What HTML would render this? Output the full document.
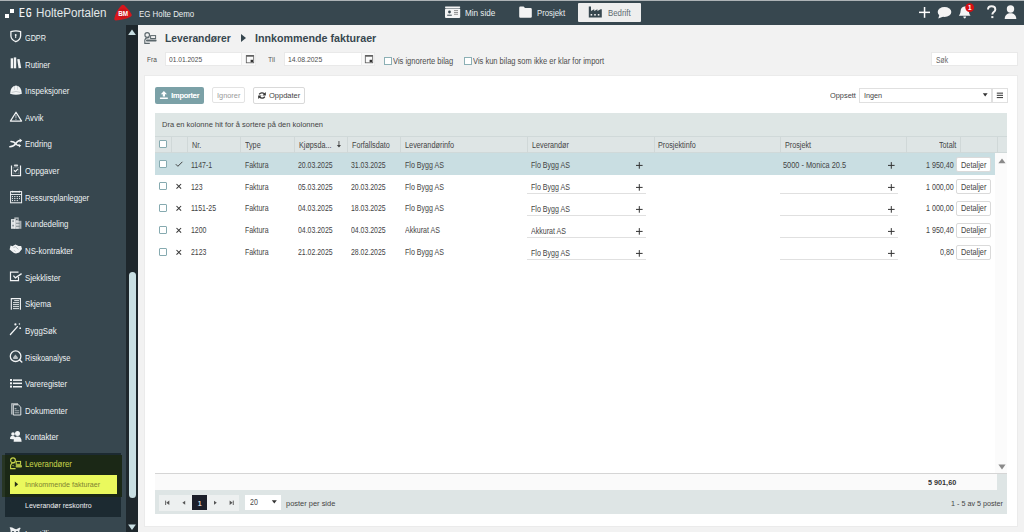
<!DOCTYPE html>
<html><head><meta charset="utf-8"><style>
*{margin:0;padding:0;box-sizing:border-box}
html,body{width:1024px;height:532px;overflow:hidden;background:#f2f2f2;font-family:"Liberation Sans",sans-serif;color:#333}
.a{position:absolute}
.t{position:absolute;white-space:nowrap;line-height:1;transform-origin:0 0}
#topstrip{left:0;top:0;width:1024px;height:1px;background:#adb3b6}
#hdr{left:0;top:1px;width:1024px;height:24px;background:#37474f}
#side{left:0;top:25px;width:126px;height:507px;background:#37474f}
#track{left:126.2px;top:25px;width:12.2px;height:507px;background:#1e272c}
#content{left:138px;top:25px;width:886px;height:507px;background:#f2f2f2}
#panel{left:144.3px;top:75.3px;width:874px;height:451.3px;background:#fff;border:1px solid #ebebeb}
</style></head>
<body>
<div id="topstrip" class="a"></div>
<div id="hdr" class="a"></div>
<div class="a" style="left:5px;top:13.5px;width:4.30px;height:4.00px;background:#fff"></div>
<div class="a" style="left:10.1px;top:8.7px;width:4.10px;height:4.10px;background:#fff"></div>
<div class="t" style="left:18.80px;top:7.00px;font-size:12.2px;color:#f2f4f5;transform:scaleX(0.6533);letter-spacing:0px;text-shadow:0.6px 0 0 #f2f4f5">E</div>
<div class="t" style="left:26.30px;top:7.00px;font-size:12.2px;color:#f2f4f5;transform:scaleX(0.5570);letter-spacing:0px;text-shadow:0.6px 0 0 #f2f4f5">G</div>
<div class="t" style="left:36.40px;top:7.00px;font-size:12.3px;color:#e3e7e9;transform:scaleX(0.9472);letter-spacing:0px;">HoltePortalen</div>
<svg class="a" style="left:113px;top:3px" width="20" height="18" viewBox="0 0 20 18">
<path d="M8.6 2.2 Q9.9 1.1 11.3 2.2 Q16 6.5 18.6 11.2 Q19.3 12.9 17.6 13.7 Q11 17 2.6 17.4 Q0.9 17.4 1.3 15.6 Q2.8 8 8.6 2.2 Z" fill="#d8161c"/>
<circle cx="10" cy="10.5" r="5" fill="#c01218" opacity="0.6"/>
<text x="10" y="12.6" font-family="Liberation Sans" font-weight="bold" font-size="6.4" fill="#fff" text-anchor="middle" letter-spacing="-0.1">BM</text>
</svg>
<div class="t" style="left:138.80px;top:9.00px;font-size:9.4px;color:#e9eef0;transform:scaleX(0.8398);letter-spacing:0px;">EG Holte Demo</div>
<svg class="a" style="left:444px;top:5px" width="18" height="14" viewBox="0 0 18 14">
<rect x="1" y="1.4" width="15.2" height="1.5" rx="0.6" fill="#f4f4f4"/>
<rect x="1" y="3.4" width="15.2" height="9.5" rx="1" fill="#f4f4f4"/>
<circle cx="5.5" cy="7" r="1.4" fill="#37474f"/>
<rect x="3.2" y="9.7" width="4.6" height="1" fill="#37474f"/>
<rect x="10" y="5.2" width="4" height="0.9" fill="#888"/>
<rect x="10" y="7" width="4" height="0.9" fill="#888"/>
<rect x="10" y="8.8" width="4" height="0.9" fill="#888"/>
</svg>
<div class="t" style="left:464.90px;top:9.00px;font-size:9.0px;color:#e9eef0;transform:scaleX(0.9038);letter-spacing:0px;">Min side</div>
<svg class="a" style="left:518px;top:5px" width="15" height="14" viewBox="0 0 15 14">
<path d="M1.2 2.8 Q1.2 1.6 2.4 1.6 L5.6 1.6 L7 3 L12.6 3 Q13.8 3 13.8 4.2 L13.8 11.8 Q13.8 12.8 12.6 12.8 L2.4 12.8 Q1.2 12.8 1.2 11.6 Z" fill="#f4f4f4"/>
</svg>
<div class="t" style="left:537.00px;top:9.00px;font-size:9.0px;color:#e9eef0;transform:scaleX(0.8649);letter-spacing:0px;">Prosjekt</div>
<div class="a" style="left:578px;top:3px;width:63.00px;height:19.40px;background:#eeeeee;border-radius:1px"></div>
<svg class="a" style="left:588px;top:5px" width="15" height="14" viewBox="0 0 15 14">
<path d="M0.8 1.6 L3 1.6 L3 6 L6.2 4.2 L6.2 6 L9.4 4.2 L9.4 6 L12.6 4.2 L13.8 4.2 L13.8 12.6 L0.8 12.6 Z" fill="#37474f"/>
<rect x="2.6" y="9" width="1.6" height="1.6" fill="#eee"/>
<rect x="6.2" y="9" width="1.6" height="1.6" fill="#eee"/>
<rect x="9.8" y="9" width="1.6" height="1.6" fill="#eee"/>
</svg>
<div class="t" style="left:607.60px;top:9.00px;font-size:9.0px;color:#5d6a70;transform:scaleX(0.8689);letter-spacing:0px;">Bedrift</div>
<svg class="a" style="left:916px;top:3px" width="108" height="18" viewBox="0 0 108 18">
<rect x="3" y="8.6" width="11" height="1.5" fill="#fff"/>
<rect x="7.8" y="4" width="1.5" height="10.8" fill="#fff"/>
<ellipse cx="28.5" cy="9" rx="6.8" ry="5" fill="#f4f4f4"/>
<path d="M23.5 11.5 L22.3 15.6 L27.5 13.6 Z" fill="#f4f4f4"/>
<path d="M48.5 3.4 C45.8 3.4 44.8 5.6 44.6 8 C44.4 10.6 43.6 11.6 42.8 12.8 L54.6 12.8 C53.8 11.6 53 10.6 52.8 8 C52.6 5.6 51.6 3.4 48.7 3.4 Z" fill="#f4f4f4"/>
<path d="M47.3 13.6 L50.1 13.6 Q49.9 15.6 48.7 15.6 Q47.5 15.6 47.3 13.6Z" fill="#f4f4f4"/>
<circle cx="53.7" cy="4.6" r="4.4" fill="#d60f13"/>
<text x="53.8" y="6.9" font-family="Liberation Sans" font-weight="bold" font-size="6.4" fill="#fff" text-anchor="middle">1</text>
<path d="M72 6.5 C72 4.4 73.6 3.2 75.6 3.2 C77.7 3.2 79.3 4.4 79.3 6.4 C79.3 8.9 76.4 9.1 76.4 11.2 L76.4 11.6" fill="none" stroke="#f4f4f4" stroke-width="2"/>
<rect x="75.3" y="13.1" width="2.1" height="2" fill="#f4f4f4"/>
<circle cx="94.5" cy="6" r="3.7" fill="#f4f4f4"/>
<path d="M88.7 16 C88.7 12 91.3 10.2 94.5 10.2 C97.7 10.2 100.3 12 100.3 16 Z" fill="#f4f4f4"/>
</svg>
<div id="side" class="a"></div>
<svg class="a" width="20" height="16" viewBox="0 0 20 16" style="left:6px;top:29.30px"><path d="M4.9 2.7 Q10 0.9 14.6 2.7 L14.6 7 Q14.3 10.9 9.8 12.7 Q5.3 10.9 4.9 7 Z" fill="none" stroke="#f2f4f5" stroke-width="1.3"/><circle cx="9.7" cy="5.9" r="0.95" fill="#f2f4f5"/><rect x="9.2" y="6" width="1" height="3" fill="#f2f4f5"/></svg>
<div class="t" style="left:25.10px;top:34.00px;font-size:8.9px;color:#eef2f4;transform:scaleX(0.8165);letter-spacing:0px;">GDPR</div>
<svg class="a" width="20" height="16" viewBox="0 0 20 16" style="left:6px;top:55.94px"><rect x="4.7" y="2.3" width="2.4" height="10" fill="#f2f4f5"/><rect x="7.8" y="1.4" width="2.4" height="10.9" fill="#f2f4f5"/><path d="M11.2 3.2 L13.6 3 L15.2 12 L12.6 12.3 Z" fill="#f2f4f5"/></svg>
<div class="t" style="left:25.10px;top:61.00px;font-size:8.9px;color:#eef2f4;transform:scaleX(0.8800);letter-spacing:0px;">Rutiner</div>
<svg class="a" width="20" height="16" viewBox="0 0 20 16" style="left:6px;top:82.58px"><path d="M4.1 10.7 Q4.3 3.2 10 2.4 Q15.7 3.2 15.9 10.7 Q10 12.6 4.1 10.7 Z" fill="#f2f4f5"/><path d="M5.6 9.4 Q10 7.6 14.4 9.4" fill="none" stroke="#37474f" stroke-width="0.5" opacity="0.5"/><rect x="8.3" y="2.8" width="0.5" height="4" fill="#37474f" opacity="0.35"/><rect x="11.2" y="2.8" width="0.5" height="4" fill="#37474f" opacity="0.35"/></svg>
<div class="t" style="left:25.10px;top:87.00px;font-size:8.9px;color:#eef2f4;transform:scaleX(0.8818);letter-spacing:0px;">Inspeksjoner</div>
<svg class="a" width="20" height="16" viewBox="0 0 20 16" style="left:6px;top:109.22px"><path d="M10 3.2 L15.6 12.1 L4.4 12.1 Z" fill="none" stroke="#f2f4f5" stroke-width="1.2" stroke-linejoin="round"/><rect x="9.5" y="5.6" width="0.9" height="3.8" fill="#f2f4f5" opacity="0.75"/><rect x="9.5" y="10.1" width="0.9" height="0.9" fill="#f2f4f5" opacity="0.75"/></svg>
<div class="t" style="left:25.10px;top:114.00px;font-size:8.9px;color:#eef2f4;transform:scaleX(0.8800);letter-spacing:0px;">Avvik</div>
<svg class="a" width="20" height="16" viewBox="0 0 20 16" style="left:6px;top:135.86px"><path d="M3.8 10.7 Q8 10.6 9.8 7.5 Q11.4 4.6 14.2 4.5" fill="none" stroke="#f2f4f5" stroke-width="1.5" stroke-linecap="round"/><path d="M5 5.6 Q8 5.7 9.6 7.6 Q11.2 9.6 13.4 9.6" fill="none" stroke="#f2f4f5" stroke-width="1.5" stroke-linecap="round"/><path d="M13.6 2.6 L16.3 4.6 L13.8 6.4 Z" fill="#f2f4f5"/><path d="M12.6 8 L15.2 9.6 L13 11.5 Z" fill="#f2f4f5"/></svg>
<div class="t" style="left:25.10px;top:140.00px;font-size:8.9px;color:#eef2f4;transform:scaleX(0.8800);letter-spacing:0px;">Endring</div>
<svg class="a" width="20" height="16" viewBox="0 0 20 16" style="left:6px;top:162.50px"><path d="M5.5 2.6 L5.5 12.6 L14.5 12.6 L14.5 2.6" fill="none" stroke="#f2f4f5" stroke-width="1.2"/><rect x="7.8" y="1.4" width="4.4" height="2.2" rx="1.1" fill="#f2f4f5" opacity="0.85"/><rect x="7.2" y="4.4" width="5.6" height="6.4" fill="none" stroke="#f2f4f5" stroke-width="0.5" opacity="0.35"/><path d="M8.1 7.3 L9.4 8.7 L12 5.9" fill="none" stroke="#f2f4f5" stroke-width="1.25"/></svg>
<div class="t" style="left:25.10px;top:167.00px;font-size:8.9px;color:#eef2f4;transform:scaleX(0.8800);letter-spacing:0px;">Oppgaver</div>
<svg class="a" width="20" height="16" viewBox="0 0 20 16" style="left:6px;top:189.14px"><rect x="4.6" y="2.6" width="11" height="11.2" fill="none" stroke="#f2f4f5" stroke-width="1"/><rect x="4.6" y="5" width="11" height="0.9" fill="#f2f4f5"/><rect x="6" y="2.1" width="8" height="1.3" rx="0.6" fill="#f2f4f5" opacity="0.75"/><circle cx="6.4" cy="2.6" r="0.9" fill="#f2f4f5"/><circle cx="13.4" cy="2.6" r="0.9" fill="#f2f4f5"/><rect x="6" y="7.1" width="1" height="1" fill="#f2f4f5"/><rect x="6" y="9.1" width="1" height="1" fill="#f2f4f5"/><rect x="6" y="11.1" width="1" height="1" fill="#f2f4f5"/><rect x="8.2" y="7.1" width="1" height="1" fill="#f2f4f5"/><rect x="8.2" y="9.1" width="1" height="1" fill="#f2f4f5"/><rect x="8.2" y="11.1" width="1" height="1" fill="#f2f4f5"/><rect x="10.9" y="7.1" width="1" height="1" fill="#f2f4f5"/><rect x="10.9" y="9.1" width="1" height="1" fill="#f2f4f5"/><rect x="10.9" y="11.1" width="1" height="1" fill="#f2f4f5"/><rect x="13" y="7.1" width="1" height="1" fill="#f2f4f5"/><rect x="13" y="9.1" width="1" height="1" fill="#f2f4f5"/><rect x="8.5" y="7.35" width="2.7" height="0.5" fill="#f2f4f5" opacity="0.5"/><rect x="8.5" y="9.35" width="2.7" height="0.5" fill="#f2f4f5" opacity="0.5"/><rect x="8.5" y="11.35" width="2.7" height="0.5" fill="#f2f4f5" opacity="0.5"/></svg>
<div class="t" style="left:25.10px;top:194.00px;font-size:8.9px;color:#eef2f4;transform:scaleX(0.8649);letter-spacing:0px;">Ressursplanlegger</div>
<svg class="a" width="20" height="16" viewBox="0 0 20 16" style="left:6px;top:215.78px"><rect x="5" y="3.1" width="4.2" height="9.7" fill="#f2f4f5" opacity="0.9"/><rect x="8.3" y="1.4" width="4.4" height="11.4" fill="#f2f4f5" opacity="0.65"/><rect x="9.6" y="4.8" width="5.8" height="8" fill="#f2f4f5" opacity="0.6"/><rect x="6.2" y="4.3" width="1.8" height="1.6" fill="#37474f" opacity="0.5"/><rect x="6.2" y="8.8" width="1.8" height="1.6" fill="#37474f" opacity="0.5"/><rect x="10" y="2.8" width="1.6" height="1.2" fill="#37474f" opacity="0.8"/><rect x="10" y="6.8" width="3.6" height="0.9" fill="#37474f" opacity="0.6"/><rect x="10" y="9.8" width="3.6" height="0.9" fill="#37474f" opacity="0.6"/></svg>
<div class="t" style="left:25.10px;top:220.00px;font-size:8.9px;color:#eef2f4;transform:scaleX(0.8800);letter-spacing:0px;">Kundedeling</div>
<svg class="a" width="20" height="16" viewBox="0 0 20 16" style="left:6px;top:242.42px"><path d="M3.6 7.6 L4.6 3.4 L6.4 4.2 L9.4 2.6 L12.6 4 L15.2 4 L16 7 L13.2 10.4 L10 11.6 L8 11 L6 9.6 Z" fill="#f2f4f5"/><path d="M7.4 5.4 L9.6 4.8 L12.4 7.4" fill="none" stroke="#37474f" stroke-width="0.5" opacity="0.6"/><path d="M8 8.2 L9.4 9.6" fill="none" stroke="#37474f" stroke-width="0.5" opacity="0.6"/></svg>
<div class="t" style="left:25.10px;top:247.00px;font-size:8.9px;color:#eef2f4;transform:scaleX(0.8800);letter-spacing:0px;">NS-kontrakter</div>
<svg class="a" width="20" height="16" viewBox="0 0 20 16" style="left:6px;top:269.06px"><path d="M12.5 3.2 L4.5 3.2 L4.5 11.6 L12.5 11.6 L12.5 8" fill="none" stroke="#f2f4f5" stroke-width="1.2"/><path d="M7.4 6.6 L9.4 8.9 L15.6 4.6" fill="none" stroke="#f2f4f5" stroke-width="1.3"/></svg>
<div class="t" style="left:25.10px;top:274.00px;font-size:8.9px;color:#eef2f4;transform:scaleX(0.8800);letter-spacing:0px;">Sjekklister</div>
<svg class="a" width="20" height="16" viewBox="0 0 20 16" style="left:6px;top:295.70px"><path d="M5.3 13.8 L5.3 2.6 L14.4 2.6 L14.4 13.8" fill="none" stroke="#f2f4f5" stroke-width="1.1"/><rect x="8.2" y="4.2" width="4.8" height="0.9" fill="#f2f4f5"/><rect x="7" y="6.2" width="6" height="0.9" fill="#f2f4f5"/><rect x="7" y="8.2" width="6" height="0.9" fill="#f2f4f5"/><rect x="7" y="10.2" width="6" height="0.9" fill="#f2f4f5"/><rect x="7" y="12.2" width="6" height="0.9" fill="#f2f4f5"/></svg>
<div class="t" style="left:25.10px;top:300.00px;font-size:8.9px;color:#eef2f4;transform:scaleX(0.8800);letter-spacing:0px;">Skjema</div>
<svg class="a" width="20" height="16" viewBox="0 0 20 16" style="left:6px;top:322.34px"><path d="M4.4 12.5 L11.4 4.6" stroke="#f2f4f5" stroke-width="1.3" stroke-linecap="round"/><circle cx="9.4" cy="2.4" r="1.1" fill="#f2f4f5"/><circle cx="13.4" cy="2" r="0.8" fill="#f2f4f5"/><circle cx="14.2" cy="6.2" r="0.9" fill="#f2f4f5"/></svg>
<div class="t" style="left:25.10px;top:327.00px;font-size:8.9px;color:#eef2f4;transform:scaleX(0.8800);letter-spacing:0px;">ByggSøk</div>
<svg class="a" width="20" height="16" viewBox="0 0 20 16" style="left:6px;top:348.98px"><circle cx="9.6" cy="7.2" r="5.3" fill="none" stroke="#f2f4f5" stroke-width="1.3"/><path d="M13.6 11 L15.8 13" stroke="#f2f4f5" stroke-width="1.5" stroke-linecap="round"/><path d="M7.2 10 L7.2 8.2 L9.4 5.6 L11.8 8.2 L11.8 10 Z" fill="#f2f4f5" opacity="0.7"/></svg>
<div class="t" style="left:25.10px;top:354.00px;font-size:8.9px;color:#eef2f4;transform:scaleX(0.8286);letter-spacing:0px;">Risikoanalyse</div>
<svg class="a" width="20" height="16" viewBox="0 0 20 16" style="left:6px;top:375.62px"><rect x="4" y="3" width="2" height="2" fill="#f2f4f5"/><rect x="4" y="6.3" width="2" height="2" fill="#f2f4f5"/><rect x="4" y="9.6" width="2" height="2" fill="#f2f4f5"/><rect x="7" y="3.4" width="9" height="1.5" fill="#f2f4f5"/><rect x="7" y="6.6" width="9" height="1.5" fill="#f2f4f5"/><rect x="7" y="10" width="9" height="1.5" fill="#f2f4f5"/></svg>
<div class="t" style="left:25.10px;top:380.00px;font-size:8.9px;color:#eef2f4;transform:scaleX(0.8822);letter-spacing:0px;">Vareregister</div>
<svg class="a" width="20" height="16" viewBox="0 0 20 16" style="left:6px;top:402.26px"><path d="M5.2 1.3 L12 1.3 L12 2.6 L6.4 2.6 L6.4 12.6 L5.2 12.6 Z" fill="#f2f4f5" opacity="0.75"/><path d="M7.3 2.8 L12.4 2.8 L14.8 5.2 L14.8 13 L7.3 13 Z" fill="none" stroke="#f2f4f5" stroke-width="1" opacity="0.9"/><rect x="8.6" y="6.4" width="1.8" height="0.8" fill="#f2f4f5"/><rect x="8.6" y="8.4" width="4.6" height="0.8" fill="#f2f4f5" opacity="0.7"/><rect x="8.6" y="10.4" width="4.6" height="0.8" fill="#f2f4f5" opacity="0.7"/></svg>
<div class="t" style="left:25.10px;top:407.00px;font-size:8.9px;color:#eef2f4;transform:scaleX(0.8800);letter-spacing:0px;">Dokumenter</div>
<svg class="a" width="20" height="16" viewBox="0 0 20 16" style="left:6px;top:428.90px"><circle cx="7" cy="5" r="1.8" fill="#f2f4f5"/><path d="M4 10 Q4 6.6 7 6.8 Q9 7 9.4 9 L8.8 10.5 Z" fill="#f2f4f5"/><circle cx="11.5" cy="4.4" r="2.5" fill="#f2f4f5"/><path d="M7.6 12.8 Q7.6 7.6 11.6 7.6 Q15.6 7.6 15.6 12.8 Z" fill="#f2f4f5"/></svg>
<div class="t" style="left:25.10px;top:433.00px;font-size:8.9px;color:#eef2f4;transform:scaleX(0.8800);letter-spacing:0px;">Kontakter</div>
<div class="a" style="left:5.4px;top:453px;width:115.60px;height:64.30px;background:#1c2a31"></div>
<div class="a" style="left:2px;top:455.4px;width:119.90px;height:41.30px;background:#1b2816"></div>
<div class="a" style="left:2px;top:455.4px;width:3.40px;height:41.30px;background:#283624"></div>
<svg class="a" style="left:6px;top:456px" width="20" height="16" viewBox="0 0 20 16"><circle cx="7" cy="4.3" r="2.4" fill="none" stroke="#c9d64c" stroke-width="1.1"/><path d="M9.2 6.8 Q5.2 6.4 4.6 9.4 L4.6 12.6 L9.6 12.6" fill="none" stroke="#c9d64c" stroke-width="1.1"/><rect x="10.2" y="5.4" width="4.4" height="2.9" fill="none" stroke="#c9d64c" stroke-width="1"/><rect x="9.6" y="9" width="6.4" height="2.6" rx="1" fill="#c9d64c" opacity="0.85"/><path d="M6.4 9.6 Q7.6 9.4 8.2 10.4" fill="none" stroke="#c9d64c" stroke-width="0.8"/></svg>
<div class="t" style="left:25.10px;top:460.00px;font-size:8.9px;color:#c9d64c;transform:scaleX(0.8813);letter-spacing:0px;">Leverandører</div>
<div class="a" style="left:9.5px;top:474.8px;width:107.80px;height:18.90px;background:#eaf95d"></div>
<svg class="a" style="left:14px;top:481px" width="6" height="7" viewBox="0 0 6 7"><path d="M0.8 0.6 L4.2 3.3 L0.8 6 Z" fill="#27301a"/></svg>
<div class="t" style="left:25.00px;top:481.00px;font-size:7.4px;color:#7e8232;transform:scaleX(0.9610);letter-spacing:0px;">Innkommende fakturaer</div>
<div class="t" style="left:25.10px;top:502.00px;font-size:7.6px;color:#eef0f2;transform:scaleX(0.9194);letter-spacing:0px;">Leverandør reskontro</div>
<svg class="a" style="left:7px;top:526px" width="20" height="8" viewBox="0 0 20 8"><path d="M2.6 1.4 Q5 1.2 7 2.4 Q8.5 3.4 9.4 3.2 Q10.4 2.6 13 1.6 L13.6 2.4 Q12.4 3.4 12.4 5 L12.4 8 L3.6 8 L3.6 5 Q3.6 3.2 2.6 1.4Z" fill="#eef0f2"/><circle cx="6" cy="6.4" r="1.3" fill="#37474f"/><circle cx="10" cy="6.4" r="1.3" fill="#37474f"/></svg>
<div class="t" style="left:25.10px;top:530.00px;font-size:8.9px;color:#eef2f4;transform:scaleX(0.8800);letter-spacing:0px;">Innstillinger</div>
<div id="track" class="a"></div>
<svg class="a" style="left:128.4px;top:28.5px" width="8" height="7" viewBox="0 0 8 7"><path d="M4 0.4 L7.9 6 L0.1 6 Z" fill="#c9dfe3"/></svg>
<div class="a" style="left:128.9px;top:271.9px;width:7.00px;height:226.10px;background:#c9dfe3;border-radius:3.5px"></div>
<svg class="a" style="left:128.4px;top:523.8px" width="8" height="7" viewBox="0 0 8 7"><path d="M0.1 0.5 L7.9 0.5 L4 6 Z" fill="#c9dfe3"/></svg>
<div id="content" class="a"></div>
<svg class="a" style="left:140px;top:28px" width="20" height="18" viewBox="0 0 20 18"><circle cx="7.2" cy="6.9" r="2.3" fill="none" stroke="#5b676c" stroke-width="1.1"/><path d="M9.4 9.7 Q5.4 9.2 4.8 12.2 L4.8 15.4 L9.8 15.4" fill="none" stroke="#5b676c" stroke-width="1.1"/><rect x="10.6" y="7.6" width="5" height="2.9" fill="none" stroke="#5b676c" stroke-width="1"/><rect x="6" y="11.6" width="10.6" height="2" rx="0.8" fill="#5b676c"/></svg>
<div class="t" style="left:165.30px;top:33.00px;font-size:11.2px;color:#37474f;font-weight:bold;transform:scaleX(0.9180);letter-spacing:0px;">Leverandører</div>
<svg class="a" style="left:240px;top:33px" width="8" height="10" viewBox="0 0 8 10"><path d="M1 1 L6 5 L1 9 Z" fill="#37474f"/></svg>
<div class="t" style="left:254.70px;top:33.00px;font-size:11.2px;color:#37474f;font-weight:bold;transform:scaleX(0.9563);letter-spacing:0px;">Innkommende fakturaer</div>
<div class="t" style="left:146.90px;top:56.00px;font-size:8.1px;color:#4d4d4d;transform:scaleX(0.8039);letter-spacing:0px;">Fra</div>
<div class="a" style="left:165.2px;top:51.6px;width:91.10px;height:14.90px;background:#fff;border:1px solid #e9e9e9"></div>
<div class="a" style="left:241.3px;top:51.6px;width:15.00px;height:14.90px;background:#fafafa;border:1px solid #ececec"></div>
<svg class="a" style="left:245.10000000000002px;top:54px" width="10" height="10" viewBox="0 0 10 10"><rect x="1.3" y="1.6" width="7.4" height="7.2" fill="none" stroke="#5a5a5a" stroke-width="0.8"/><rect x="1.3" y="1.2" width="7.4" height="1.5" fill="#5a5a5a"/><rect x="5.6" y="5.8" width="2.4" height="2.4" fill="#333"/></svg>
<div class="t" style="left:169.30px;top:56.00px;font-size:7.8px;color:#4d4d4d;transform:scaleX(0.8504);letter-spacing:0px;">01.01.2025</div>
<div class="a" style="left:284.0px;top:51.6px;width:91.30px;height:14.90px;background:#fff;border:1px solid #e9e9e9"></div>
<div class="a" style="left:360.5px;top:51.6px;width:14.80px;height:14.90px;background:#fafafa;border:1px solid #ececec"></div>
<svg class="a" style="left:364.3px;top:54px" width="10" height="10" viewBox="0 0 10 10"><rect x="1.3" y="1.6" width="7.4" height="7.2" fill="none" stroke="#5a5a5a" stroke-width="0.8"/><rect x="1.3" y="1.2" width="7.4" height="1.5" fill="#5a5a5a"/><rect x="5.6" y="5.8" width="2.4" height="2.4" fill="#333"/></svg>
<div class="t" style="left:288.30px;top:56.00px;font-size:7.8px;color:#4d4d4d;transform:scaleX(0.8760);letter-spacing:0px;">14.08.2025</div>
<div class="t" style="left:268.20px;top:56.00px;font-size:8.1px;color:#5a5a5a;transform:scaleX(0.8594);letter-spacing:0px;">Til</div>
<div class="a" style="left:384.2px;top:57.0px;width:7.60px;height:7.60px;background:#fff;border:1px solid #8cb0b5"></div>
<div class="t" style="left:392.80px;top:57.00px;font-size:8.4px;color:#4d4d4d;transform:scaleX(0.9005);letter-spacing:0px;">Vis ignorerte bilag</div>
<div class="a" style="left:464.3px;top:57.0px;width:7.60px;height:7.60px;background:#fff;border:1px solid #8cb0b5"></div>
<div class="t" style="left:472.70px;top:57.00px;font-size:8.4px;color:#4d4d4d;transform:scaleX(0.8979);letter-spacing:0px;">Vis kun bilag som ikke er klar for import</div>
<div class="a" style="left:930.9px;top:51.6px;width:87.30px;height:14.70px;background:#fff;border:1px solid #e9e9e9"></div>
<div class="t" style="left:935.50px;top:56.00px;font-size:8.6px;color:#666;transform:scaleX(0.7882);letter-spacing:0px;">Søk</div>
<div id="panel" class="a"></div>
<div class="a" style="left:155.2px;top:86.9px;width:48.40px;height:17.30px;background:#7ba1a7;border-radius:2px"></div>
<svg class="a" style="left:158px;top:90px" width="11" height="10" viewBox="0 0 11 10"><path d="M5.9 1 L9 4.2 L7 4.2 L7 6.6 L4.8 6.6 L4.8 4.2 L2.8 4.2 Z" fill="#fff"/><rect x="1.9" y="7.4" width="8" height="1.6" rx="0.4" fill="#fff"/></svg>
<div class="t" style="left:170.50px;top:92.00px;font-size:8.0px;color:#fff;transform:scaleX(0.9530);letter-spacing:0px;text-shadow:0.25px 0 0 #fff">Importer</div>
<div class="a" style="left:212.1px;top:87.4px;width:33.00px;height:16.10px;background:#fff;border:1px solid #e3e3e3;border-radius:2px"></div>
<div class="t" style="left:216.80px;top:92.00px;font-size:7.9px;color:#9a9a9a;transform:scaleX(0.9344);letter-spacing:0px;">Ignorer</div>
<div class="a" style="left:253.1px;top:87.1px;width:51.60px;height:17.40px;background:#fff;border:1px solid #d9d9d9;border-radius:2px"></div>
<svg class="a" style="left:257px;top:91px" width="10" height="9" viewBox="0 0 10 9"><path d="M7.8 3.6 A3.2 3.2 0 0 0 2.2 3.4" fill="none" stroke="#333" stroke-width="1.3"/><path d="M2.2 5.4 A3.2 3.2 0 0 0 7.8 5.6" fill="none" stroke="#333" stroke-width="1.3"/><path d="M8.8 0.9 L8.8 4.4 L5.4 4.4 Z" fill="#333"/><path d="M1.2 8.1 L1.2 4.6 L4.6 4.6 Z" fill="#333"/></svg>
<div class="t" style="left:268.50px;top:92.00px;font-size:7.9px;color:#444;transform:scaleX(0.9501);letter-spacing:0px;">Oppdater</div>
<div class="t" style="left:830.25px;top:92.00px;font-size:7.7px;color:#444;transform:scaleX(0.9629);letter-spacing:0px;">Oppsett</div>
<div class="a" style="left:859.3px;top:87.6px;width:132.70px;height:15.90px;background:#fff;border:1px solid #e0e0e0"></div>
<div class="t" style="left:864.10px;top:92.00px;font-size:7.7px;color:#444;transform:scaleX(0.9436);letter-spacing:0px;">Ingen</div>
<svg class="a" style="left:982px;top:92px" width="7" height="6" viewBox="0 0 7 6"><path d="M0.8 1.2 L5.6 1.2 L3.2 4.4 Z" fill="#333"/></svg>
<div class="a" style="left:992px;top:87.6px;width:15.60px;height:15.90px;background:#fff;border:1px solid #e0e0e0"></div>
<svg class="a" style="left:996px;top:91px" width="8" height="9" viewBox="0 0 8 9"><rect x="0.8" y="1.6" width="6.2" height="1.1" fill="#444"/><rect x="0.8" y="3.8" width="6.2" height="1.1" fill="#444"/><rect x="0.8" y="6" width="6.2" height="1.1" fill="#444"/></svg>
<div class="a" style="left:155.2px;top:112.5px;width:851.80px;height:23.90px;background:#dee6e5"></div>
<div class="t" style="left:161.80px;top:121.00px;font-size:8.0px;color:#444;transform:scaleX(0.9378);letter-spacing:0px;">Dra en kolonne hit for å sortere på den kolonnen</div>
<div class="a" style="left:155.2px;top:136.4px;width:851.80px;height:17.00px;background:#dee5e5;border-top:1px solid #d0d9d9;border-bottom:1px solid #d0d9d9"></div>
<div class="a" style="left:170.9px;top:137px;width:1.00px;height:16.00px;background:#d0d8d8"></div>
<div class="a" style="left:187.0px;top:137px;width:1.00px;height:16.00px;background:#d0d8d8"></div>
<div class="a" style="left:239.8px;top:137px;width:1.00px;height:16.00px;background:#d0d8d8"></div>
<div class="a" style="left:293.7px;top:137px;width:1.00px;height:16.00px;background:#d0d8d8"></div>
<div class="a" style="left:346.9px;top:137px;width:1.00px;height:16.00px;background:#d0d8d8"></div>
<div class="a" style="left:400.1px;top:137px;width:1.00px;height:16.00px;background:#d0d8d8"></div>
<div class="a" style="left:527.3px;top:137px;width:1.00px;height:16.00px;background:#d0d8d8"></div>
<div class="a" style="left:653.8px;top:137px;width:1.00px;height:16.00px;background:#d0d8d8"></div>
<div class="a" style="left:780.1px;top:137px;width:1.00px;height:16.00px;background:#d0d8d8"></div>
<div class="a" style="left:906.4px;top:137px;width:1.00px;height:16.00px;background:#d0d8d8"></div>
<div class="a" style="left:960.0px;top:137px;width:1.00px;height:16.00px;background:#d0d8d8"></div>
<div class="a" style="left:996.6px;top:137px;width:1.00px;height:16.00px;background:#d0d8d8"></div>
<div class="a" style="left:159.1px;top:140.2px;width:7.70px;height:7.60px;background:#fff;border:1.1px solid #86aab0;border-radius:1px"></div>
<div class="t" style="left:191.80px;top:141.00px;font-size:8.3px;color:#444;transform:scaleX(0.8660);letter-spacing:0px;">Nr.</div>
<div class="t" style="left:245.00px;top:141.00px;font-size:8.3px;color:#444;transform:scaleX(0.8700);letter-spacing:0px;">Type</div>
<div class="t" style="left:298.70px;top:141.00px;font-size:8.3px;color:#444;transform:scaleX(0.8700);letter-spacing:0px;">Kjøpsda...</div>
<div class="t" style="left:352.10px;top:141.00px;font-size:8.3px;color:#444;transform:scaleX(0.8700);letter-spacing:0px;">Forfallsdato</div>
<div class="t" style="left:404.80px;top:141.00px;font-size:8.3px;color:#444;transform:scaleX(0.8814);letter-spacing:0px;">Leverandørinfo</div>
<div class="t" style="left:531.70px;top:141.00px;font-size:8.3px;color:#444;transform:scaleX(0.8700);letter-spacing:0px;">Leverandør</div>
<div class="t" style="left:658.30px;top:141.00px;font-size:8.3px;color:#444;transform:scaleX(0.8700);letter-spacing:0px;">Prosjektinfo</div>
<div class="t" style="left:784.50px;top:141.00px;font-size:8.3px;color:#444;transform:scaleX(0.8700);letter-spacing:0px;">Prosjekt</div>
<div class="t" style="left:938.64px;top:141.00px;font-size:8.3px;color:#444;transform:scaleX(0.8700);letter-spacing:0px;">Totalt</div>
<svg class="a" style="left:336px;top:140px" width="6" height="9" viewBox="0 0 6 9"><rect x="2.5" y="1" width="0.9" height="5.5" fill="#444"/><path d="M0.9 5 L5 5 L2.95 7.6 Z" fill="#444"/></svg>
<div class="a" style="left:155.2px;top:153.4px;width:841.80px;height:320.00px;background:#fff"></div>
<div class="a" style="left:995px;top:153.4px;width:12.00px;height:320.00px;background:#fbfbfb"></div>
<svg class="a" style="left:996.5px;top:156.5px" width="10" height="8" viewBox="0 0 10 8"><path d="M5 1.5 L8.6 6.2 L1.4 6.2 Z" fill="#8a8a8a"/></svg>
<svg class="a" style="left:996.5px;top:462.5px" width="10" height="8" viewBox="0 0 10 8"><path d="M1.4 1.5 L8.6 1.5 L5 6.6 Z" fill="#8a8a8a"/></svg>
<div class="a" style="left:155.2px;top:153.4px;width:839.80px;height:21.80px;background:#c9dee2"></div>
<div class="a" style="left:159.1px;top:160.20000000000002px;width:7.70px;height:7.60px;background:#fff;border:1.1px solid #86aab0;border-radius:1px"></div>
<svg class="a" style="left:174px;top:159.4px" width="10" height="10" viewBox="0 0 10 10"><path d="M1.8 5.2 L3.9 7.3 L8.4 2.8" fill="none" stroke="#3a3a3a" stroke-width="0.95"/></svg>
<div class="t" style="left:191.10px;top:161.00px;font-size:8.4px;color:#444;transform:scaleX(0.8300);letter-spacing:0px;">1147-1</div>
<div class="t" style="left:244.70px;top:161.00px;font-size:8.4px;color:#444;transform:scaleX(0.8275);letter-spacing:0px;">Faktura</div>
<div class="t" style="left:298.10px;top:161.00px;font-size:8.4px;color:#444;transform:scaleX(0.8254);letter-spacing:0px;">20.03.2025</div>
<div class="t" style="left:351.30px;top:161.00px;font-size:8.4px;color:#444;transform:scaleX(0.8260);letter-spacing:0px;">31.03.2025</div>
<div class="t" style="left:404.70px;top:161.00px;font-size:8.4px;color:#444;transform:scaleX(0.8440);letter-spacing:0px;">Flo Bygg AS</div>
<div class="t" style="left:530.80px;top:161.00px;font-size:8.4px;color:#444;transform:scaleX(0.8440);letter-spacing:0px;">Flo Bygg AS</div>
<svg class="a" style="left:635.2px;top:160.8px" width="9" height="9" viewBox="0 0 9 9"><rect x="1" y="3.9" width="6.6" height="1" fill="#333"/><rect x="3.8" y="1.1" width="1" height="6.6" fill="#333"/></svg>
<svg class="a" style="left:887.4px;top:160.8px" width="9" height="9" viewBox="0 0 9 9"><rect x="1" y="3.9" width="6.6" height="1" fill="#333"/><rect x="3.8" y="1.1" width="1" height="6.6" fill="#333"/></svg>
<div class="t" style="left:783.00px;top:161.00px;font-size:8.4px;color:#444;transform:scaleX(0.8803);letter-spacing:0px;">5000 - Monica 20.5</div>
<div class="t" style="left:926.19px;top:161.00px;font-size:8.4px;color:#444;transform:scaleX(0.8500);letter-spacing:0px;">1 950,40</div>
<div class="a" style="left:956.4px;top:156.8px;width:34.70px;height:15.60px;background:#fff;border:1px solid #dadada;border-radius:2px"></div>
<div class="t" style="left:961.00px;top:161.00px;font-size:8.4px;color:#444;transform:scaleX(0.8777);letter-spacing:0px;">Detaljer</div>
<div class="a" style="left:159.1px;top:182.20000000000002px;width:7.70px;height:7.60px;background:#fff;border:1.1px solid #86aab0;border-radius:1px"></div>
<svg class="a" style="left:174px;top:181.4px" width="10" height="10" viewBox="0 0 10 10"><path d="M2.5 3 L7.1 7.6 M7.1 3 L2.5 7.6" fill="none" stroke="#333" stroke-width="1.05"/></svg>
<div class="t" style="left:191.10px;top:183.00px;font-size:8.4px;color:#444;transform:scaleX(0.8300);letter-spacing:0px;">123</div>
<div class="t" style="left:244.70px;top:183.00px;font-size:8.4px;color:#444;transform:scaleX(0.8275);letter-spacing:0px;">Faktura</div>
<div class="t" style="left:298.10px;top:183.00px;font-size:8.4px;color:#444;transform:scaleX(0.8254);letter-spacing:0px;">05.03.2025</div>
<div class="t" style="left:351.30px;top:183.00px;font-size:8.4px;color:#444;transform:scaleX(0.8260);letter-spacing:0px;">20.03.2025</div>
<div class="t" style="left:404.70px;top:183.00px;font-size:8.4px;color:#444;transform:scaleX(0.8440);letter-spacing:0px;">Flo Bygg AS</div>
<div class="t" style="left:530.80px;top:183.00px;font-size:8.4px;color:#444;transform:scaleX(0.8440);letter-spacing:0px;">Flo Bygg AS</div>
<svg class="a" style="left:635.2px;top:182.8px" width="9" height="9" viewBox="0 0 9 9"><rect x="1" y="3.9" width="6.6" height="1" fill="#333"/><rect x="3.8" y="1.1" width="1" height="6.6" fill="#333"/></svg>
<svg class="a" style="left:887.4px;top:182.8px" width="9" height="9" viewBox="0 0 9 9"><rect x="1" y="3.9" width="6.6" height="1" fill="#333"/><rect x="3.8" y="1.1" width="1" height="6.6" fill="#333"/></svg>
<div class="a" style="left:527.4px;top:193.4px;width:118.20px;height:1.00px;background:#e0e0e0"></div>
<div class="a" style="left:780px;top:193.4px;width:118.00px;height:1.00px;background:#e0e0e0"></div>
<div class="t" style="left:926.19px;top:183.00px;font-size:8.4px;color:#444;transform:scaleX(0.8500);letter-spacing:0px;">1 000,00</div>
<div class="a" style="left:956.4px;top:178.8px;width:34.70px;height:15.60px;background:#fff;border:1px solid #dadada;border-radius:2px"></div>
<div class="t" style="left:961.00px;top:183.00px;font-size:8.4px;color:#444;transform:scaleX(0.8777);letter-spacing:0px;">Detaljer</div>
<div class="a" style="left:159.1px;top:204.20000000000002px;width:7.70px;height:7.60px;background:#fff;border:1.1px solid #86aab0;border-radius:1px"></div>
<svg class="a" style="left:174px;top:203.4px" width="10" height="10" viewBox="0 0 10 10"><path d="M2.5 3 L7.1 7.6 M7.1 3 L2.5 7.6" fill="none" stroke="#333" stroke-width="1.05"/></svg>
<div class="t" style="left:191.10px;top:204.00px;font-size:8.4px;color:#444;transform:scaleX(0.8300);letter-spacing:0px;">1151-25</div>
<div class="t" style="left:244.70px;top:204.00px;font-size:8.4px;color:#444;transform:scaleX(0.8275);letter-spacing:0px;">Faktura</div>
<div class="t" style="left:298.10px;top:204.00px;font-size:8.4px;color:#444;transform:scaleX(0.8254);letter-spacing:0px;">04.03.2025</div>
<div class="t" style="left:351.30px;top:204.00px;font-size:8.4px;color:#444;transform:scaleX(0.8260);letter-spacing:0px;">18.03.2025</div>
<div class="t" style="left:404.70px;top:204.00px;font-size:8.4px;color:#444;transform:scaleX(0.8440);letter-spacing:0px;">Flo Bygg AS</div>
<div class="t" style="left:530.80px;top:205.00px;font-size:8.4px;color:#444;transform:scaleX(0.8440);letter-spacing:0px;">Flo Bygg AS</div>
<svg class="a" style="left:635.2px;top:204.8px" width="9" height="9" viewBox="0 0 9 9"><rect x="1" y="3.9" width="6.6" height="1" fill="#333"/><rect x="3.8" y="1.1" width="1" height="6.6" fill="#333"/></svg>
<svg class="a" style="left:887.4px;top:204.8px" width="9" height="9" viewBox="0 0 9 9"><rect x="1" y="3.9" width="6.6" height="1" fill="#333"/><rect x="3.8" y="1.1" width="1" height="6.6" fill="#333"/></svg>
<div class="a" style="left:527.4px;top:215.4px;width:118.20px;height:1.00px;background:#e0e0e0"></div>
<div class="a" style="left:780px;top:215.4px;width:118.00px;height:1.00px;background:#e0e0e0"></div>
<div class="t" style="left:926.19px;top:204.00px;font-size:8.4px;color:#444;transform:scaleX(0.8500);letter-spacing:0px;">1 000,00</div>
<div class="a" style="left:956.4px;top:200.8px;width:34.70px;height:15.60px;background:#fff;border:1px solid #dadada;border-radius:2px"></div>
<div class="t" style="left:961.00px;top:204.00px;font-size:8.4px;color:#444;transform:scaleX(0.8777);letter-spacing:0px;">Detaljer</div>
<div class="a" style="left:159.1px;top:226.20000000000002px;width:7.70px;height:7.60px;background:#fff;border:1.1px solid #86aab0;border-radius:1px"></div>
<svg class="a" style="left:174px;top:225.4px" width="10" height="10" viewBox="0 0 10 10"><path d="M2.5 3 L7.1 7.6 M7.1 3 L2.5 7.6" fill="none" stroke="#333" stroke-width="1.05"/></svg>
<div class="t" style="left:191.10px;top:226.00px;font-size:8.4px;color:#444;transform:scaleX(0.8300);letter-spacing:0px;">1200</div>
<div class="t" style="left:244.70px;top:226.00px;font-size:8.4px;color:#444;transform:scaleX(0.8275);letter-spacing:0px;">Faktura</div>
<div class="t" style="left:298.10px;top:226.00px;font-size:8.4px;color:#444;transform:scaleX(0.8254);letter-spacing:0px;">04.03.2025</div>
<div class="t" style="left:351.30px;top:226.00px;font-size:8.4px;color:#444;transform:scaleX(0.8260);letter-spacing:0px;">04.03.2025</div>
<div class="t" style="left:404.70px;top:226.00px;font-size:8.4px;color:#444;transform:scaleX(0.8440);letter-spacing:0px;">Akkurat AS</div>
<div class="t" style="left:530.80px;top:227.00px;font-size:8.4px;color:#444;transform:scaleX(0.8440);letter-spacing:0px;">Akkurat AS</div>
<svg class="a" style="left:635.2px;top:226.8px" width="9" height="9" viewBox="0 0 9 9"><rect x="1" y="3.9" width="6.6" height="1" fill="#333"/><rect x="3.8" y="1.1" width="1" height="6.6" fill="#333"/></svg>
<svg class="a" style="left:887.4px;top:226.8px" width="9" height="9" viewBox="0 0 9 9"><rect x="1" y="3.9" width="6.6" height="1" fill="#333"/><rect x="3.8" y="1.1" width="1" height="6.6" fill="#333"/></svg>
<div class="a" style="left:527.4px;top:237.4px;width:118.20px;height:1.00px;background:#e0e0e0"></div>
<div class="a" style="left:780px;top:237.4px;width:118.00px;height:1.00px;background:#e0e0e0"></div>
<div class="t" style="left:926.19px;top:226.00px;font-size:8.4px;color:#444;transform:scaleX(0.8500);letter-spacing:0px;">1 950,40</div>
<div class="a" style="left:956.4px;top:222.8px;width:34.70px;height:15.60px;background:#fff;border:1px solid #dadada;border-radius:2px"></div>
<div class="t" style="left:961.00px;top:226.00px;font-size:8.4px;color:#444;transform:scaleX(0.8777);letter-spacing:0px;">Detaljer</div>
<div class="a" style="left:159.1px;top:248.20000000000002px;width:7.70px;height:7.60px;background:#fff;border:1.1px solid #86aab0;border-radius:1px"></div>
<svg class="a" style="left:174px;top:247.4px" width="10" height="10" viewBox="0 0 10 10"><path d="M2.5 3 L7.1 7.6 M7.1 3 L2.5 7.6" fill="none" stroke="#333" stroke-width="1.05"/></svg>
<div class="t" style="left:191.10px;top:248.00px;font-size:8.4px;color:#444;transform:scaleX(0.8300);letter-spacing:0px;">2123</div>
<div class="t" style="left:244.70px;top:248.00px;font-size:8.4px;color:#444;transform:scaleX(0.8275);letter-spacing:0px;">Faktura</div>
<div class="t" style="left:298.10px;top:248.00px;font-size:8.4px;color:#444;transform:scaleX(0.8254);letter-spacing:0px;">21.02.2025</div>
<div class="t" style="left:351.30px;top:248.00px;font-size:8.4px;color:#444;transform:scaleX(0.8260);letter-spacing:0px;">28.02.2025</div>
<div class="t" style="left:404.70px;top:248.00px;font-size:8.4px;color:#444;transform:scaleX(0.8440);letter-spacing:0px;">Flo Bygg AS</div>
<div class="t" style="left:530.80px;top:249.00px;font-size:8.4px;color:#444;transform:scaleX(0.8440);letter-spacing:0px;">Flo Bygg AS</div>
<svg class="a" style="left:635.2px;top:248.8px" width="9" height="9" viewBox="0 0 9 9"><rect x="1" y="3.9" width="6.6" height="1" fill="#333"/><rect x="3.8" y="1.1" width="1" height="6.6" fill="#333"/></svg>
<svg class="a" style="left:887.4px;top:248.8px" width="9" height="9" viewBox="0 0 9 9"><rect x="1" y="3.9" width="6.6" height="1" fill="#333"/><rect x="3.8" y="1.1" width="1" height="6.6" fill="#333"/></svg>
<div class="a" style="left:527.4px;top:259.4px;width:118.20px;height:1.00px;background:#e0e0e0"></div>
<div class="a" style="left:780px;top:259.4px;width:118.00px;height:1.00px;background:#e0e0e0"></div>
<div class="t" style="left:940.11px;top:248.00px;font-size:8.4px;color:#444;transform:scaleX(0.8500);letter-spacing:0px;">0,80</div>
<div class="a" style="left:956.4px;top:244.8px;width:34.70px;height:15.60px;background:#fff;border:1px solid #dadada;border-radius:2px"></div>
<div class="t" style="left:961.00px;top:248.00px;font-size:8.4px;color:#444;transform:scaleX(0.8777);letter-spacing:0px;">Detaljer</div>
<div class="a" style="left:155.2px;top:473.4px;width:841.80px;height:16.40px;background:#fafafa;border-top:1px solid #d5d5d5"></div>
<div class="a" style="left:997px;top:473.4px;width:10.40px;height:16.40px;background:#dee5e5;border-top:1px solid #d5d5d5"></div>
<div class="t" style="left:927.80px;top:479.00px;font-size:8.0px;color:#333;font-weight:bold;transform:scaleX(0.9050);letter-spacing:0px;">5 901,60</div>
<div class="a" style="left:155.2px;top:489.8px;width:852.20px;height:24.70px;background:#dee5e5"></div>
<div class="a" style="left:159px;top:494.7px;width:80.20px;height:16.10px;background:#edf0f0"></div>
<div class="a" style="left:192px;top:495.2px;width:15.00px;height:14.80px;background:#1b1e29"></div>
<div class="t" style="left:197.60px;top:500.00px;font-size:8.0px;color:#fff;transform:scaleX(1.0000);letter-spacing:0px;">1</div>
<svg class="a" style="left:162px;top:498px" width="76" height="10" viewBox="0 0 76 10"><rect x="3.2" y="2.6" width="0.9" height="4.4" fill="#555"/><path d="M7.3 2.6 L7.3 7 L4.3 4.8 Z" fill="#555"/><path d="M23.2 2.8 L23.2 6.8 L20.4 4.8 Z" fill="#555"/><path d="M52 2.8 L52 6.8 L54.8 4.8 Z" fill="#555"/><path d="M67.6 2.6 L67.6 7 L70.6 4.8 Z" fill="#555"/><rect x="70.8" y="2.6" width="0.9" height="4.4" fill="#555"/></svg>
<div class="a" style="left:245.2px;top:495px;width:36.20px;height:15.00px;background:#fff"></div>
<div class="t" style="left:249.60px;top:499.00px;font-size:8.2px;color:#4a4a4a;transform:scaleX(0.8600);letter-spacing:0px;">20</div>
<svg class="a" style="left:271px;top:499px" width="7" height="6" viewBox="0 0 7 6"><path d="M0.8 1.2 L5.8 1.2 L3.3 4.6 Z" fill="#333"/></svg>
<div class="t" style="left:286.00px;top:500.00px;font-size:8.0px;color:#444;transform:scaleX(0.9316);letter-spacing:0px;">poster per side</div>
<div class="t" style="left:951.00px;top:500.00px;font-size:8.0px;color:#444;transform:scaleX(0.8997);letter-spacing:0px;">1 - 5 av 5 poster</div>
</body></html>
